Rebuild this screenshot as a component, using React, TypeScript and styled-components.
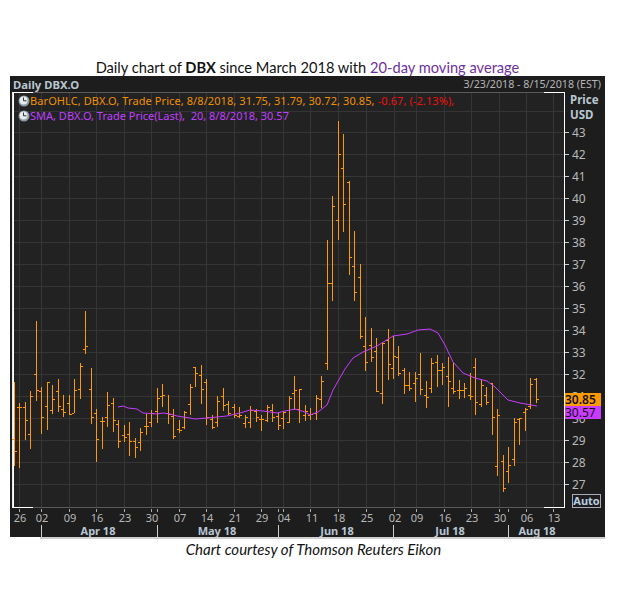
import React from "react";
import styled, { createGlobalStyle } from "styled-components";

const Global = createGlobalStyle`
  html, body { margin: 0; padding: 0; background: #fff; }
  #root { width: 621px; height: 596px; overflow: hidden; }
`;

type Bar = [number, number, number, number, number];
const bars: Bar[] = [
  [14,382,466,439,451],[19,403,468,407,407],[25,402,440,407,420],[30,391,449,434,396],[36,321,401,374,390],
  [41,387,434,391,417],[47,382,430,406,382],[52,385,414,410,399],[58,379,412,391,406],[63,395,417,409,412],
  [69,395,415,403,414],[74,379,413,413,390],[80,363,399,389,366],[85,311,354,349,346],[91,368,424,389,417],
  [96,409,462,413,439],[102,417,449,421,421],[107,392,427,417,405],[113,398,432,403,420],[118,420,448,424,441],
  [124,425,442,435,437],[129,422,456,434,441],[135,438,458,441,447],[140,428,451,442,432],[146,414,435,426,426],
  [151,410,427,422,413],[157,388,423,411,398],[162,384,407,396,395],[168,395,424,413,414],[173,409,439,416,436],
  [179,420,433,429,430],[184,411,429,427,412],[190,384,415,404,387],[195,367,387,367,373],[201,365,404,375,389],
  [206,379,425,382,417],[212,415,429,419,427],[217,396,427,422,401],[223,388,411,396,405],[228,401,415,404,413],
  [234,404,418,407,415],[239,407,418,416,415],[245,415,428,423,417],[250,406,428,422,410],[256,409,422,411,417],
  [261,415,431,419,419],[267,405,422,420,407],[272,404,422,410,417],[278,412,430,416,425],[283,411,429,418,412],
  [289,396,423,422,398],[294,376,410,393,390],[299,389,423,409,389],[305,405,421,415,411],[310,408,420,415,414],
  [316,395,420,413,398],[321,376,408,399,381],[327,240,370,363,283],[332,196,301,283,206],[338,121,240,220,154],
  [343,134,232,168,204],[349,181,275,182,257],[354,231,301,266,292],[360,264,339,277,336],[365,317,371,346,362],
  [371,328,362,345,357],[376,338,392,351,391],[382,343,404,393,343],[388,329,380,340,364],[393,336,379,368,356],
  [398,346,376,357,373],[404,368,394,370,385],[409,372,391,385,388],[415,372,402,383,378],[420,353,395,374,389],
  [426,381,408,395,397],[431,358,393,388,363],[437,355,387,362,370],[442,363,385,370,367],[448,357,407,376,381],
  [453,363,394,388,391],[459,380,399,390,390],[464,383,398,390,388],[470,373,400,395,396],[475,358,415,367,402],
  [481,380,407,404,385],[486,387,405,395,402],[492,383,435,383,417],[497,409,476,466,415],[503,455,492,461,488],
  [508,447,483,471,465],[514,418,466,459,422],[519,418,445,419,418],[525,408,431,412,409],[530,378,409,406,384],
  [536,378,403,379,399],
];

const sma =
  "118,407 123,406 128,408 137,409 143,413 157,414 163,413 170,414 177,416 190,418 195,419 207,418 217,417 227,416 240,413 250,410 263,411 277,413 285,411 295,409 305,412 310,415 318,412 327,405 333,390 345,369 353,358 363,352 377,346 393,336 407,334 418,330 430,329 438,333 445,345 453,362 463,373 475,378 487,381 495,387 508,400 520,403 537,406";

const gridX = [19,41,69,96,124,151,179,206,234,261,283,310,338,366,394,416,444,471,499,526,553];
const days = [
  [19,"26"],[41,"02"],[69,"09"],[96,"16"],[124,"23"],[151,"30"],[179,"07"],[206,"14"],[234,"21"],[261,"29"],[283,"04"],
  [311,"11"],[338,"18"],[366,"25"],[394,"02"],[416,"09"],[444,"16"],[471,"23"],[499,"30"],[526,"06"],[553,"13"],
] as const;
const months = [[98,"Apr 18"],[217,"May 18"],[337,"Jun 18"],[450,"Jul 18"],[537,"Aug 18"]] as const;
const dividers = [41,157,278,393,508];
const extraTicks = [157,278,508];
const prices = [43,42,41,40,39,38,37,36,35,34,33,32,31,30,29,28,27];
const priceY = (p: number) => Math.round(483.5 - (p - 27) * 21.94);

const Page = styled.div`
  width: 621px;
  height: 596px;
  display: flex;
  flex-direction: column;
  padding-top: 59px;
  box-sizing: border-box;
  background: #fff;
`;
const Title = styled.h1`
  margin: 0;
  height: 17px;
  width: 615px;
  text-align: center;
  font: 400 14.65px/17px Lato, "Open Sans", sans-serif;
  color: #111;
  b { font-weight: 700; }
`;
const Accent = styled.span`
  color: #7030a0;
`;
const Panel = styled.section`
  margin-left: 10px;
  width: 595px;
  background: #1d1d1d;
  font-family: "Noto Sans", sans-serif;
`;
const Header = styled.header`
  height: 16px;
  display: flex;
  justify-content: space-between;
  align-items: center;
  padding: 0 4px 0 3px;
`;
const ChartName = styled.span`
  font-size: 11.3px;
  font-weight: 700;
  color: #b9c6d2;
`;
const DateRange = styled.span`
  font-size: 10.7px;
  color: #b5b5b5;
`;
const Body = styled.div`
  display: flex;
  padding-left: 2px;
`;
const Plot = styled.div`
  position: relative;
  width: 553px;
  height: 416px;
  background: #222;
`;
const Drawing = styled.svg`
  display: block;
`;
const Legend = styled.div`
  position: absolute;
  left: 6px;
  top: 2px;
  display: flex;
  flex-direction: column;
  font-size: 11px;
  line-height: 14.5px;
  white-space: nowrap;
`;
const LegendRow = styled.div<{ $color: string; $spacing: number }>`
  display: flex;
  align-items: center;
  gap: 0;
  color: ${(p) => p.$color};
  letter-spacing: ${(p) => p.$spacing}px;
`;
const Down = styled.span`
  color: #f01010;
  margin-left: 3px;
`;
const Axis = styled.div`
  position: relative;
  width: 40px;
  height: 416px;
`;
const AxisHead = styled.div`
  position: absolute;
  left: 5px;
  top: 0;
  font-size: 11.5px;
  line-height: 15px;
  font-weight: 700;
  color: #b9c6d2;
`;
const Badge = styled.div<{ $bg: string; $top: number; $weight: number }>`
  position: absolute;
  left: 0;
  top: ${(p) => p.$top}px;
  width: 36px;
  height: 13px;
  background: ${(p) => p.$bg};
  color: #111;
  font-size: 12px;
  line-height: 13px;
  font-weight: ${(p) => p.$weight};
  box-sizing: border-box;
`;
const AutoBox = styled.div`
  position: absolute;
  left: 7px;
  top: 402px;
  width: 27px;
  height: 12px;
  border: 1px solid #aab;
  font-size: 11px;
  line-height: 12px;
  font-weight: 700;
  text-align: center;
  color: #b9cde0;
`;
const BottomRule = styled.div`
  margin-left: 40px;
  width: 565px;
  height: 2px;
  background: #cfcfcf;
`;
const Caption = styled.p`
  margin: 1px 0 0;
  width: 627px;
  text-align: center;
  font: italic 400 15px/18px Lato, "Open Sans", sans-serif;
  color: #111;
`;

const Clock = () => (
  <svg width="12" height="12" viewBox="0 0 12 12" aria-hidden="true">
    <circle cx="6" cy="6" r="5.5" fill="#8d99a4" />
    <circle cx="5.6" cy="5.4" r="4" fill="#e6ebef" />
    <path d="M5.5 2.5V5.8H8.5" fill="none" stroke="#333" strokeWidth="1" />
  </svg>
);

export default function App() {
  return (
    <Page>
      <Global />
      <Title>
        Daily chart of <b>DBX</b> since March 2018 with <Accent>20-day moving average</Accent>
      </Title>
      <Panel>
        <Header>
          <ChartName>Daily DBX.O</ChartName>
          <DateRange>3/23/2018 - 8/15/2018 (EST)</DateRange>
        </Header>
        <Body>
          <Plot>
            <Drawing width="553" height="416" viewBox="12 92 553 416" shapeRendering="crispEdges">
              {gridX.map((x) => (
                <line key={x} x1={x + 0.5} x2={x + 0.5} y1={92} y2={507} stroke="#353535" />
              ))}
              {[44, ...prices].map((p) => (
                <line key={p} x1={13} x2={564} y1={priceY(p) + 0.5} y2={priceY(p) + 0.5} stroke="#353535" />
              ))}
              <path d="M33 92.5H544M33 507.5H544" stroke="#5a5a5a" fill="none" />
              <path d="M33 92.5H13V507.5H33M544 92.5H564.5V507.5H544" stroke="#fff" strokeWidth="1" fill="none" />
              <line x1={12.5} x2={12.5} y1={92} y2={508} stroke="#e8e8e8" />
              {bars.map(([x, h, l, o, c]) => (
                <g key={x} stroke="#ff9900" fill="none">
                  <line x1={x + 0.5} x2={x + 0.5} y1={h} y2={l} />
                  <line x1={x - 2} x2={x} y1={o + 0.5} y2={o + 0.5} />
                  <line x1={x + 1} x2={x + 3} y1={c + 0.5} y2={c + 0.5} />
                </g>
              ))}
              <polyline points={sma} fill="none" stroke="#c83cff" strokeWidth="1" shapeRendering="auto" />
            </Drawing>
            <Legend>
              <LegendRow $color="#f09000" $spacing={0.09}>
                <Clock />
                <span>BarOHLC, DBX.O, Trade Price, 8/8/2018, 31.75, 31.79, 30.72, 30.85,<Down>-0.67, (-2.13%),</Down></span>
              </LegendRow>
              <LegendRow $color="#c040ff" $spacing={0}>
                <Clock />
                <span>SMA, DBX.O, Trade Price(Last), &nbsp;20, 8/8/2018, 30.57</span>
              </LegendRow>
            </Legend>
          </Plot>
          <Axis>
            <Drawing width="40" height="416" viewBox="565 92 40 416">
              {prices.map((p) => (
                <g key={p}>
                  <line x1={565} x2={569} y1={priceY(p) + 0.5} y2={priceY(p) + 0.5} stroke="#ccc" />
                  <text x={572} y={priceY(p) + 5} fontSize="12" fill="#b8b8b8" fontFamily="Noto Sans, sans-serif">
                    {p}
                  </text>
                </g>
              ))}
            </Drawing>
            <AxisHead>Price<br />USD</AxisHead>
            <Badge $bg="#ff9900" $top={301} $weight={600}>30.85</Badge>
            <Badge $bg="#c83cff" $top={314} $weight={400}>30.57</Badge>
            <AutoBox>Auto</AutoBox>
          </Axis>
        </Body>
        <Drawing width="595" height="29" viewBox="10 508 595 29" fontFamily="Noto Sans, sans-serif">
          {[...gridX, ...extraTicks].map((x) => (
            <line key={x} x1={x + 0.5} x2={x + 0.5} y1={509} y2={512} stroke="#aaa" shapeRendering="crispEdges" />
          ))}
          {days.map(([x, t], i) => (
            <text key={i} x={x + 1} y={522} textAnchor="middle" fontSize="11" fill="#b8b8b8">{t}</text>
          ))}
          {dividers.map((x) => (
            <line key={x} x1={x + 0.5} x2={x + 0.5} y1={525} y2={537} stroke="#ccc" shapeRendering="crispEdges" />
          ))}
          {months.map(([x, t]) => (
            <text key={t} x={x} y={535} textAnchor="middle" fontSize="11" fontWeight="700" fill="#b9c6d2">{t}</text>
          ))}
        </Drawing>
      </Panel>
      <BottomRule />
      <Caption>Chart courtesy of Thomson Reuters Eikon</Caption>
    </Page>
  );
}
